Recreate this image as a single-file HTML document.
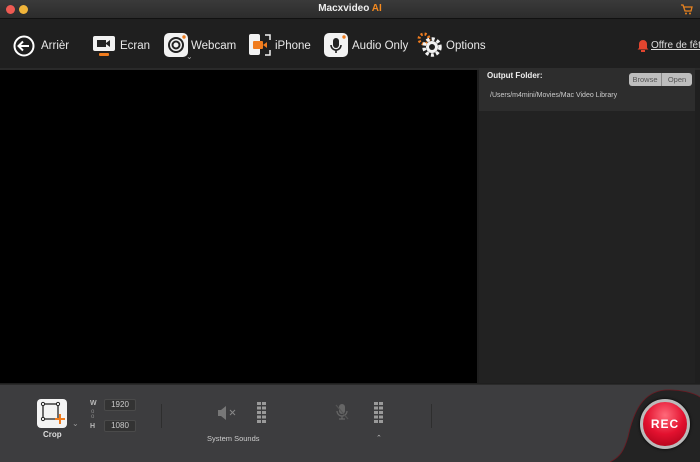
<!DOCTYPE html>
<html><head><meta charset="utf-8"><style>
*{margin:0;padding:0;box-sizing:border-box}
body{width:700px;height:462px;overflow:hidden;background:#1f1f1f;font-family:"Liberation Sans",sans-serif;position:relative}
.a{position:absolute}
.title{left:0;top:0;width:700px;height:19px;background:linear-gradient(#3a3a3a,#2c2c2c);border-bottom:1px solid #111}
.tb{left:0;top:19px;width:700px;height:49px;background:#1f1f1f}
.lbl{color:#e8e8e8;font-size:11.5px;top:40px}
.ico{top:33px;width:24px;height:24px;background:#f2f2f2;border-radius:5px}
.bottom{left:0;top:384px;width:700px;height:78px;background:#3d3d3f;border-top:1px solid #2a2a2a}
.inp{width:32px;height:12px;background:#333;border:1px solid #4a4a4a;border-radius:2px;color:#ccc;font-size:8px;text-align:center;line-height:10px}
.bars{width:9px;height:22px;background:repeating-linear-gradient(#9a9a9a 0 3px,transparent 3px 4.5px)}
.bars::after{content:"";position:absolute;left:4px;top:0;width:1px;height:22px;background:#3d3d3f}
</style></head><body>
<div class="a title"></div>
<div class="a" style="left:6px;top:5px;width:9px;height:9px;border-radius:50%;background:#ee5a52"></div>
<div class="a" style="left:19px;top:5px;width:9px;height:9px;border-radius:50%;background:#f0b43a"></div>
<div class="a" style="left:0;top:3px;width:700px;text-align:center;color:#eee;font-size:10px;font-weight:bold">Macxvideo <span style="color:#f58a1f">AI</span></div>
<svg class="a" style="left:681px;top:4px" width="12" height="11" viewBox="0 0 12 11"><path d="M0 1h2l2 6h6l1-4H3" fill="none" stroke="#e8821f" stroke-width="1.3"/><circle cx="5" cy="9.5" r="1" fill="#e8821f"/><circle cx="9" cy="9.5" r="1" fill="#e8821f"/></svg>
<div class="a tb"></div>
<svg class="a" style="left:13px;top:35px" width="22" height="22" viewBox="0 0 22 22"><circle cx="11" cy="11" r="9.5" fill="none" stroke="#fff" stroke-width="2"/><path d="M16 11H6M10 6.5L5.5 11 10 15.5" fill="none" stroke="#fff" stroke-width="2"/></svg>
<div class="a lbl" style="left:41px">Arrièr</div>
<svg class="a" style="left:92px;top:35px" width="24" height="22" viewBox="0 0 24 22"><rect x="1" y="1" width="22" height="15" rx="2" fill="#f2f2f2"/><rect x="5" y="5" width="9" height="7" fill="#222"/><path d="M14 8l4-3v7l-4-3z" fill="#222"/><rect x="7" y="18" width="10" height="3" rx="1" fill="#f07c1e"/></svg>
<div class="a lbl" style="left:120px">Ecran</div>
<div class="a ico" style="left:164px"></div>
<svg class="a" style="left:164px;top:33px" width="24" height="24"><circle cx="12" cy="12" r="7" fill="none" stroke="#222" stroke-width="2"/><circle cx="12" cy="12" r="3.5" fill="none" stroke="#222" stroke-width="2"/><circle cx="20" cy="4" r="1.7" fill="#f07c1e"/></svg>
<div class="a" style="left:186px;top:52px;color:#aaa;font-size:8px">⌄</div>
<div class="a lbl" style="left:191px">Webcam</div>
<svg class="a" style="left:248px;top:33px" width="24" height="24" viewBox="0 0 24 24"><rect x="1" y="1" width="11" height="21" rx="2" fill="#f2f2f2"/><rect x="5" y="8" width="10" height="8" rx="1" fill="#f07c1e"/><path d="M15 12l4-3v6z" fill="#f07c1e"/><path d="M17 2h5v5M22 17v5h-5" fill="none" stroke="#f2f2f2" stroke-width="1.5"/></svg>
<div class="a lbl" style="left:275px">iPhone</div>
<div class="a ico" style="left:324px"></div>
<svg class="a" style="left:324px;top:33px" width="24" height="24"><rect x="9" y="5" width="6" height="10" rx="3" fill="#222"/><path d="M7 12a5 5 0 0 0 10 0M12 17v3" fill="none" stroke="#222" stroke-width="1.6"/><circle cx="20" cy="4" r="1.7" fill="#f07c1e"/></svg>
<div class="a lbl" style="left:352px">Audio Only</div>
<svg class="a" style="left:417px;top:32px" width="26" height="26" viewBox="0 0 26 26"><circle cx="7" cy="7" r="5" fill="none" stroke="#f07c1e" stroke-width="3" stroke-dasharray="2 2"/><circle cx="15" cy="15" r="8" fill="none" stroke="#f2f2f2" stroke-width="3.5" stroke-dasharray="3 2.3"/><circle cx="15" cy="15" r="6" fill="#f2f2f2"/><circle cx="15" cy="15" r="3" fill="#1f1f1f"/></svg>
<div class="a lbl" style="left:446px">Options</div>
<svg class="a" style="left:637px;top:38px" width="12" height="14" viewBox="0 0 12 14"><path d="M2 10V6a4 4 0 0 1 8 0v4l1.5 1.5h-11z" fill="#e2452f"/><rect x="4" y="12" width="4" height="2" fill="#e2452f"/></svg>
<div class="a" style="left:651px;top:40px;color:#ddd;font-size:10px;text-decoration:underline;white-space:nowrap">Offre de fête</div>
<div class="a" style="left:0;top:68px;width:700px;height:2px;background:#2a2a2a"></div>
<div class="a" style="left:0;top:70px;width:477px;height:313px;background:#000"></div>
<div class="a" style="left:479px;top:68px;width:216px;height:43px;background:#2d2d2d"></div>
<div class="a" style="left:479px;top:111px;width:216px;height:272px;background:#222"></div>
<div class="a" style="left:487px;top:71px;color:#eee;font-size:8px;font-weight:bold">Output Folder:</div>
<div class="a" style="left:629px;top:73px;width:63px;height:13px;background:#bdbdbd;border-radius:3px"></div>
<div class="a" style="left:661px;top:73px;width:1px;height:13px;background:#888"></div>
<div class="a" style="left:629px;top:75px;width:32px;text-align:center;color:#555;font-size:7.5px">Browse</div>
<div class="a" style="left:662px;top:75px;width:30px;text-align:center;color:#555;font-size:7.5px">Open</div>
<div class="a" style="left:490px;top:92px;color:#ccc;font-size:7px">/Users/m4mini/Movies/Mac Video Library</div>
<div class="a bottom"></div>
<div class="a" style="left:37px;top:399px;width:30px;height:29px;background:#f4f4f4;border-radius:4px"></div>
<svg class="a" style="left:37px;top:399px" width="30" height="29"><rect x="6" y="5" width="15" height="15" fill="none" stroke="#222" stroke-width="1.3"/><circle cx="6" cy="5" r="1.6" fill="#fff" stroke="#222"/><circle cx="21" cy="5" r="1.6" fill="#fff" stroke="#222"/><circle cx="6" cy="20" r="1.6" fill="#fff" stroke="#222"/><path d="M23 15v10M18 20h10" stroke="#f07c1e" stroke-width="2"/></svg>
<div class="a" style="left:43px;top:430px;color:#ddd;font-size:8px;font-weight:bold">Crop</div>
<div class="a" style="left:72px;top:419px;color:#999;font-size:8px">⌄</div>
<div class="a" style="left:90px;top:400px;color:#bbb;font-size:7px;font-weight:bold">W</div>
<div class="a" style="left:91px;top:410px;color:#888;font-size:6px;line-height:5px">o<br>o</div>
<div class="a" style="left:90px;top:423px;color:#bbb;font-size:7px;font-weight:bold">H</div>
<div class="a inp" style="left:104px;top:399px">1920</div>
<div class="a inp" style="left:104px;top:420px">1080</div>
<div class="a" style="left:161px;top:404px;width:1px;height:24px;background:#2e2e2e"></div>
<div class="a" style="left:431px;top:404px;width:1px;height:24px;background:#2e2e2e"></div>
<svg class="a" style="left:217px;top:406px" width="22" height="14"><path d="M1 4h3l5-4v14l-5-4H1z" fill="#777"/><path d="M13 4l5 5M18 4l-5 5" stroke="#888" stroke-width="1"/></svg>
<div class="a bars" style="left:257px;top:402px"></div>
<div class="a" style="left:207px;top:434px;color:#ccc;font-size:7.5px">System Sounds</div>
<svg class="a" style="left:335px;top:403px" width="14" height="18"><rect x="4" y="1" width="6" height="10" rx="3" fill="#666"/><path d="M2 8a5 5 0 0 0 10 0M7 13v3M4 16h6" fill="none" stroke="#666" stroke-width="1.2"/><path d="M1 2l12 14" stroke="#555" stroke-width="1.2"/></svg>
<div class="a bars" style="left:374px;top:402px"></div>
<div class="a" style="left:376px;top:434px;color:#bbb;font-size:7px">⌃</div>
<svg class="a" style="left:610px;top:385px" width="90" height="77" viewBox="0 0 90 77"><path d="M0 77C10 72 14 66 18 52C24 24 34 7 55 5C70 4 84 8 90 12V77Z" fill="#232323"/><path d="M0 77C10 72 14 66 18 52C24 24 34 7 55 5C70 4 84 8 90 12" fill="none" stroke="#6a1a22" stroke-width="0.8"/></svg>
<div class="a" style="left:640px;top:399px;width:50px;height:50px;border-radius:50%;background:radial-gradient(circle at 50% 30%,#ff6a7a,#e3112f 50%,#a00015);border:3px solid #bbb;box-shadow:0 0 3px #000"></div>
<div class="a" style="left:640px;top:417px;width:50px;text-align:center;color:#fff;font-size:12px;font-weight:bold;letter-spacing:1px">REC</div>
</body></html>
